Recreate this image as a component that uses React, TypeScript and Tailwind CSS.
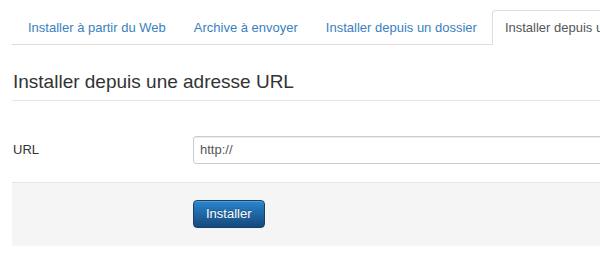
const tabs = [
  { label: "Installer à partir du Web", active: false },
  { label: "Archive à envoyer", active: false },
  { label: "Installer depuis un dossier", active: false },
  { label: "Installer depuis une adresse URL", active: true },
];

export default function App() {
  return (
    <div
      className="w-[600px] h-[280px] overflow-hidden bg-white pl-[12px] pt-[10px] text-[13px] text-[#333]"
      style={{ fontFamily: '"Liberation Sans", Arial, sans-serif' }}
    >
      <div className="w-[900px]">
        {/* Tabs */}
        <ul className="flex border-b border-[#ddd] pl-[3px]">
          {tabs.map((t) => (
            <li key={t.label} className="mr-[2px] -mb-px">
              <a
                className={
                  t.active
                    ? "block whitespace-nowrap px-[12px] py-[8px] leading-[17px] rounded-t-[4px] border border-[#ddd] border-b-white bg-white text-[#555]"
                    : "block whitespace-nowrap px-[12px] py-[8px] leading-[17px] border border-transparent text-[#3a7fc0]"
                }
              >
                {t.label}
              </a>
            </li>
          ))}
        </ul>

        {/* Legend */}
        <div className="mt-[19px] w-[600px] border-b border-[#e5e5e5] pl-[1px] text-[19px] leading-[36px] text-[#333]">
          Installer depuis une adresse URL
        </div>

        {/* Control group */}
        <div className="flex items-center mt-[35px] mb-[18px]">
          <label className="w-[181px] shrink-0 pl-[1px] text-[#333]">URL</label>
          <div className="w-[600px] h-[28px] border border-[#ccc] rounded-[3px] shadow-[inset_0_1px_1px_rgba(0,0,0,0.075)] flex items-center px-[6px] text-[#555]">
            http://
          </div>
        </div>

        {/* Form actions */}
        <div className="w-[600px] bg-[#f5f5f5] border-t border-[#e5e5e5] pt-[17px] pb-[18px] pl-[181px]">
          <button className="h-[28px] px-[12px] rounded-[4px] border border-[#1a3f6a] bg-gradient-to-b from-[#2a86d0] to-[#15497c] text-white text-[13px] leading-[26px] [text-shadow:0_-1px_0_rgba(0,0,0,0.25)] shadow-[inset_0_1px_0_rgba(255,255,255,0.2)]">
            Installer
          </button>
        </div>
      </div>
    </div>
  );
}
